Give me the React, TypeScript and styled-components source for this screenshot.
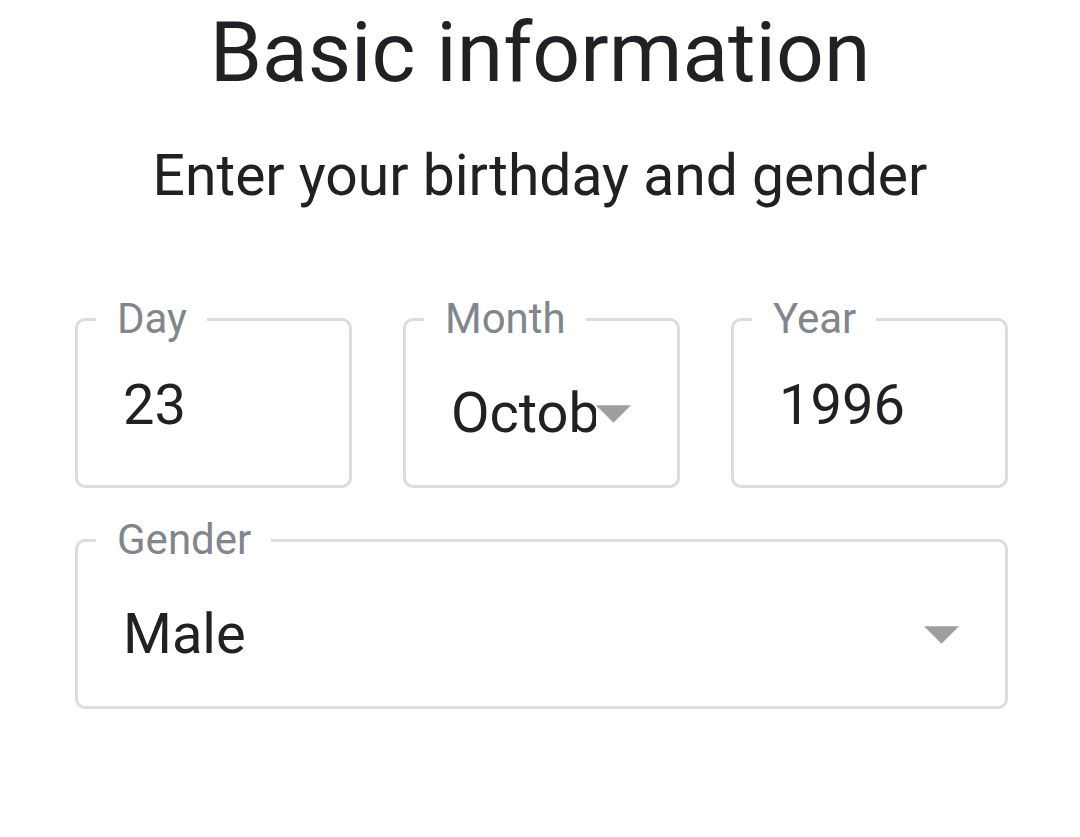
import React from "react";
import styled, { createGlobalStyle } from "styled-components";

const Global = createGlobalStyle`
  html, body { margin: 0; padding: 0; background: #ffffff; }
  body { font-family: Roboto, "Noto Sans", Arial, sans-serif; color: #202124; }
`;

const Page = styled.div`
  width: 1080px;
  padding-top: 3px;
  display: flex;
  flex-direction: column;
  align-items: center;
`;

const Title = styled.h1`
  margin: 0;
  font-family: Roboto, sans-serif;
  font-weight: 400;
  font-size: 84px;
  line-height: 100px;
  color: #202124;
  text-align: center;
`;

const Subtitle = styled.p`
  margin: 40px 0 0;
  font-family: Roboto, sans-serif;
  font-weight: 400;
  font-size: 57px;
  line-height: 66px;
  color: #202124;
  text-align: center;
`;

const Form = styled.div`
  width: 933px;
  margin: 109px 0 0 3px;
  display: flex;
  flex-direction: column;
  gap: 51px;
`;

const Row = styled.div`
  display: grid;
  grid-template-columns: repeat(3, minmax(0, 1fr));
  gap: 51px;
`;

const Field = styled.div<{ $select?: boolean }>`
  position: relative;
  box-sizing: border-box;
  height: 170px;
  min-width: 0;
  border: 3px solid #dadce0;
  border-radius: 10px;
  padding: ${(p) => (p.$select ? "59px" : "51px")} 46px 0 45px;
  display: flex;
  align-items: flex-start;
`;

const Label = styled.span`
  position: absolute;
  top: -27px;
  left: 18px;
  padding: 0 20px 0 21px;
  background: #ffffff;
  font-size: 42px;
  line-height: 50px;
  color: #80868b;
  white-space: nowrap;
`;

const Value = styled.span<{ $clip?: boolean }>`
  flex: 1;
  min-width: 0;
  overflow: ${(p) => (p.$clip ? "hidden" : "visible")};
  white-space: nowrap;
  font-size: 56px;
  line-height: 66px;
  color: #202124;
`;

const Arrow = styled.svg`
  flex: none;
  width: 35px;
  height: 18px;
  margin-top: 25px;
`;

function Caret() {
  return (
    <Arrow viewBox="0 0 36 18">
      <path d="M0 0 L36 0 L18 18 Z" fill="#9e9e9e" />
    </Arrow>
  );
}

export default function App() {
  return (
    <>
      <Global />
      <Page>
        <Title>Basic information</Title>
        <Subtitle>Enter your birthday and gender</Subtitle>
        <Form>
          <Row>
            <Field>
              <Label>Day</Label>
              <Value>23</Value>
            </Field>
            <Field $select>
              <Label>Month</Label>
              <Value $clip>October</Value>
              <Caret />
            </Field>
            <Field>
              <Label>Year</Label>
              <Value>1996</Value>
            </Field>
          </Row>
          <Field $select>
            <Label>Gender</Label>
            <Value $clip>Male</Value>
            <Caret />
          </Field>
        </Form>
      </Page>
    </>
  );
}
